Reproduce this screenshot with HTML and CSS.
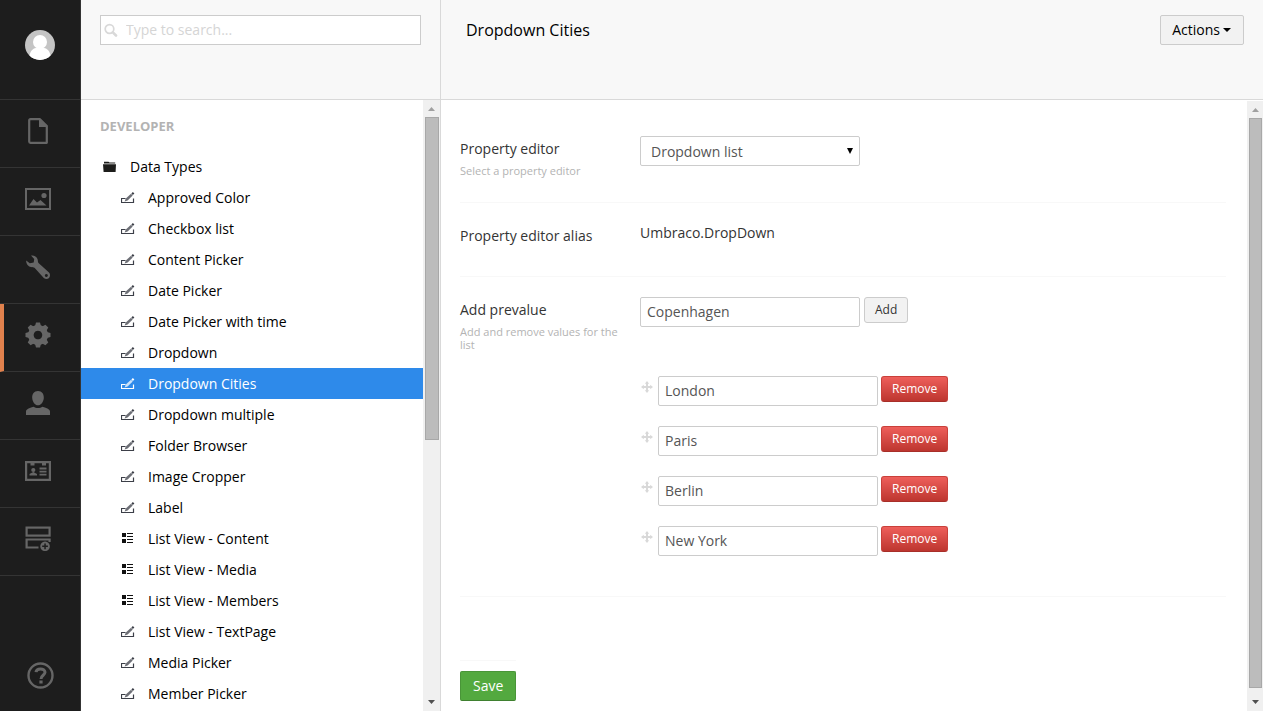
FILE: index.html
```html
<!DOCTYPE html>
<html lang="en">
<head>
<meta charset="utf-8">
<title>Dropdown Cities</title>
<link rel="stylesheet" href="styles.css">
</head>
<body>
<svg class="sprite" aria-hidden="true">
  <symbol id="i-edit" viewBox="0 0 14 12"><path d="M4.500 6.500H.5V10.500H12.500V6.500" fill="none" stroke="currentColor" stroke-width="1.200"/><path d="M3.600 9.500L4.800 6.600L10 1.800L11.700 3.400L6.600 8.500Z" fill="currentColor" opacity=".75"/><path d="M10.400 1.500L11.900 0L13.400 1.500L11.900 3Z" fill="currentColor"/></symbol>
  <symbol id="i-list" viewBox="0 0 14 12"><path d="M1 0h4v4h-4zM1 6h4v4h-4zM6 0h6v1h-6zM6 3h6v1h-6zM6 6h6v1h-6zM6 9h6v1h-6z" fill="currentColor"/></symbol>
  <symbol id="i-move" viewBox="0 0 12 12"><path d="M6 0L8.200 2.800H7V5H9.200V3.800L12 6L9.200 8.200V7H7V9.200H8.200L6 12L3.800 9.200H5V7H2.800V8.200L0 6L2.800 3.800V5H5V2.800H3.800Z" fill="currentColor"/></symbol>
  <symbol id="i-up" viewBox="0 0 7 4"><path d="M0 4L3.500 0L7 4Z" fill="currentColor"/></symbol>
  <symbol id="i-down" viewBox="0 0 7 4"><path d="M0 0H7L3.500 4Z" fill="currentColor"/></symbol>
</svg>
<div class="app">
  <nav class="rail" aria-label="Sections">
    <button class="avatar" aria-label="User profile">
      <svg viewBox="0 0 30 30"><defs><clipPath id="round"><circle cx="15" cy="15" r="15"/></clipPath></defs><g clip-path="url(#round)"><rect width="30" height="30" fill="#c4c4c4"/><circle cx="15" cy="12" r="7" fill="#fff"/><path d="M4 30C4 21 8 18.500 11 18H19C22 18.500 26 21 26 30Z" fill="#fff"/></g></svg>
    </button>
    <a class="section" href="#" aria-label="Content"><svg viewBox="0 0 26 26"><path d="M5.500 1.200H15L21.800 8V24.800H5.500Q4.200 24.800 4.200 23.500V2.500Q4.200 1.200 5.500 1.200Z" fill="none" stroke="currentColor" stroke-width="2.200" stroke-linejoin="round"/><path d="M14 1L22.500 9H14Z" fill="currentColor"/></svg></a>
    <a class="section" href="#" aria-label="Media"><svg viewBox="0 0 26 26"><rect x="1" y="3" width="24" height="20" fill="none" stroke="currentColor" stroke-width="2"/><path d="M4 19.500L8.500 13L12 16.500L15.500 14L21.500 19.500Z" fill="currentColor"/><circle cx="19" cy="9.500" r="2.600" fill="currentColor"/></svg></a>
    <a class="section" href="#" aria-label="Settings"><svg viewBox="0 0 26 26"><path fill-rule="evenodd" d="M6 1.500C9 1 11.500 2.500 12.500 5C13 6.700 12.800 8 13.500 9L24 18.500C25.500 20 25.300 22.500 24 24C22.500 25.500 20.300 25.400 18.800 24L9.500 13.800C8.700 13 7.500 13.300 6 13C3 12.500 1 9.800 1.200 6.500L4.800 9.200L8.700 8.600L9.200 5ZM21.300 20a1.500 1.500 0 1 0 .1 0Z" fill="currentColor"/></svg></a>
    <a class="section active" href="#" aria-label="Developer"><svg viewBox="0 0 26 26"><g fill="currentColor"><path fill-rule="evenodd" d="M13 3a10 10 0 1 0 .1 0ZM13 8.700a4.300 4.300 0 1 1-.1 0Z"/><path id="tooth" d="M10 4L11 .5H15L16 4Z"/><use href="#tooth" transform="rotate(45 13 13)"/><use href="#tooth" transform="rotate(90 13 13)"/><use href="#tooth" transform="rotate(135 13 13)"/><use href="#tooth" transform="rotate(180 13 13)"/><use href="#tooth" transform="rotate(225 13 13)"/><use href="#tooth" transform="rotate(270 13 13)"/><use href="#tooth" transform="rotate(315 13 13)"/></g></svg></a>
    <a class="section" href="#" aria-label="Users"><svg viewBox="0 0 26 26"><path d="M13 1C17 1 19 4 18.800 8C18.500 12 16 15.300 13 15.300S7.500 12 7.200 8C7 4 9 1 13 1ZM1 25V21.500C1 19.500 4 18 8.500 16.800C11 18.500 15 18.500 17.500 16.800C22 18 25 19.500 25 21.500V25Z" fill="currentColor"/></svg></a>
    <a class="section" href="#" aria-label="Members"><svg viewBox="0 0 26 26"><path fill-rule="evenodd" d="M0 3H26V23H0ZM2.200 5.200V20.800H23.800V5.200H21V7.500H17V5.200H9.500V7.500H5.500V5.200Z" fill="currentColor"/><circle cx="8.300" cy="12" r="2.100" fill="currentColor"/><path d="M4.500 17.500V16L8.300 14L12 16V17.500ZM14.500 9.500h7v2h-7zM14.500 12.700h7v1.800h-7zM14.500 15.700h7v1.800h-7z" fill="currentColor"/></svg></a>
    <a class="section" href="#" aria-label="Forms"><svg viewBox="0 0 26 26"><rect x="1.600" y="1.600" width="23" height="8" fill="none" stroke="currentColor" stroke-width="2.200"/><path d="M13.500 21.500H1.600V13.500H24.600V16" fill="none" stroke="currentColor" stroke-width="2.200"/><path fill-rule="evenodd" d="M20 15.500a4.800 4.800 0 1 0 .1 0ZM19.300 17.500h1.500v2.100h2.100v1.500h-2.100v2.100h-1.500v-2.100h-2.100v-1.500h2.100Z" fill="currentColor"/></svg></a>
    <a class="help" href="#" aria-label="Help"><svg viewBox="0 0 27 27"><circle cx="13.500" cy="13.500" r="12" fill="none" stroke="currentColor" stroke-width="2.400"/><path d="M9 10.200C9.300 5.800 18 5.800 18 10.300C18 13.300 14 13.300 14 17" fill="none" stroke="currentColor" stroke-width="3"/><rect x="12.400" y="18.500" width="3.200" height="3" fill="currentColor"/></svg></a>
  </nav>

  <aside class="side">
    <div class="bar search">
      <label class="search-box">
        <svg viewBox="0 0 14 14" aria-hidden="true"><circle cx="5.500" cy="6" r="4.300" fill="none" stroke="currentColor" stroke-width="1.700"/><path d="M8.800 9.300L12 12.500" stroke="currentColor" stroke-width="2.600" stroke-linecap="round"/></svg>
        <input type="text" placeholder="Type to search..." aria-label="Search">
      </label>
    </div>
    <div class="pane">
      <div class="tree">
        <h2>DEVELOPER</h2>
        <a class="node root" href="#"><svg viewBox="0 0 14 12"><path d="M1 2V.8H5.500L6.500 1.600H12.200V2.600H1ZM0 3.300H13L12.600 11H.6Z" fill="currentColor"/></svg>Data Types</a>
        <ul>
          <li><a class="node" href="#"><svg><use href="#i-edit"/></svg>Approved Color</a></li>
          <li><a class="node" href="#"><svg><use href="#i-edit"/></svg>Checkbox list</a></li>
          <li><a class="node" href="#"><svg><use href="#i-edit"/></svg>Content Picker</a></li>
          <li><a class="node" href="#"><svg><use href="#i-edit"/></svg>Date Picker</a></li>
          <li><a class="node" href="#"><svg><use href="#i-edit"/></svg>Date Picker with time</a></li>
          <li><a class="node" href="#"><svg><use href="#i-edit"/></svg>Dropdown</a></li>
          <li><a class="node current" href="#" aria-current="page"><svg><use href="#i-edit"/></svg>Dropdown Cities</a></li>
          <li><a class="node" href="#"><svg><use href="#i-edit"/></svg>Dropdown multiple</a></li>
          <li><a class="node" href="#"><svg><use href="#i-edit"/></svg>Folder Browser</a></li>
          <li><a class="node" href="#"><svg><use href="#i-edit"/></svg>Image Cropper</a></li>
          <li><a class="node" href="#"><svg><use href="#i-edit"/></svg>Label</a></li>
          <li><a class="node list" href="#"><svg><use href="#i-list"/></svg>List View - Content</a></li>
          <li><a class="node list" href="#"><svg><use href="#i-list"/></svg>List View - Media</a></li>
          <li><a class="node list" href="#"><svg><use href="#i-list"/></svg>List View - Members</a></li>
          <li><a class="node" href="#"><svg><use href="#i-edit"/></svg>List View - TextPage</a></li>
          <li><a class="node" href="#"><svg><use href="#i-edit"/></svg>Media Picker</a></li>
          <li><a class="node" href="#"><svg><use href="#i-edit"/></svg>Member Picker</a></li>
        </ul>
      </div>
      <div class="scroll" aria-hidden="true">
        <svg class="up"><use href="#i-up"/></svg>
        <div class="groove"><div class="thumb" style="height: 56%"></div></div>
        <svg><use href="#i-down"/></svg>
      </div>
    </div>
  </aside>

  <main class="main">
    <header class="bar head">
      <h1>Dropdown Cities</h1>
      <button class="actions">Actions <svg viewBox="0 0 8 4" aria-hidden="true"><path d="M0 0H8L4 4Z"/></svg></button>
    </header>
    <div class="pane">
      <form class="form">
        <div class="row">
          <div class="label"><label for="editor">Property editor</label><small>Select a property editor</small></div>
          <div class="field">
            <div class="select"><select id="editor"><option>Dropdown list</option></select><svg viewBox="0 0 6 6" preserveAspectRatio="none" aria-hidden="true"><path d="M0 0H6L3 6Z"/></svg></div>
          </div>
        </div>
        <div class="row">
          <div class="label"><span>Property editor alias</span></div>
          <div class="field">Umbraco.DropDown</div>
        </div>
        <div class="row">
          <div class="label"><label for="prevalue">Add prevalue</label><small>Add and remove values for the list</small></div>
          <div class="field">
            <div class="adder"><input id="prevalue" class="text" type="text" value="Copenhagen"><button type="button" class="btn">Add</button></div>
            <ul class="values">
              <li><svg><use href="#i-move"/></svg><input class="text" type="text" value="London" aria-label="Value 1"><button type="button" class="btn remove">Remove</button></li>
              <li><svg><use href="#i-move"/></svg><input class="text" type="text" value="Paris" aria-label="Value 2"><button type="button" class="btn remove">Remove</button></li>
              <li><svg><use href="#i-move"/></svg><input class="text" type="text" value="Berlin" aria-label="Value 3"><button type="button" class="btn remove">Remove</button></li>
              <li><svg><use href="#i-move"/></svg><input class="text" type="text" value="New York" aria-label="Value 4"><button type="button" class="btn remove">Remove</button></li>
            </ul>
          </div>
        </div>
        <div class="submit"><button type="submit" class="save">Save</button></div>
      </form>
      <div class="scroll wide" aria-hidden="true">
        <svg class="up"><use href="#i-up"/></svg>
        <div class="groove"><div class="thumb" style="height: 99%"></div></div>
        <svg><use href="#i-down"/></svg>
      </div>
    </div>
  </main>
</div>
</body>
</html>
```
FILE: styles.css
```css
* { box-sizing: border-box; }
body { margin: 0; font: 14px/20px "Open Sans", sans-serif; color: #343434; background: #fff; }
button, input, select { font: inherit; margin: 0; }
a { color: inherit; text-decoration: none; }
ul { list-style: none; margin: 0; padding: 0; }
svg { display: block; flex: none; }
.sprite { display: none; }
.app { display: flex; height: 100vh; overflow: hidden; }

/* Section rail */
.rail { display: flex; flex-direction: column; flex: none; width: 81px; background: #1d1d1d; border-right: 1px solid #343434; color: #666; }
.avatar { display: flex; flex: none; height: 100px; padding: 30px 25px; background: none; border: 0; border-bottom: 1px solid #343434; }
.avatar svg { width: 30px; height: 30px; }
.section { display: flex; flex: none; height: 68px; padding: 18px 25px; border-bottom: 1px solid #343434; }
.section svg { width: 26px; height: 26px; }
.section.active { border-left: 4px solid #e0814d; border-bottom-color: #343434; padding-left: 21px; }
.help { margin-top: auto; padding: 0 27px 22px; }
.help svg { width: 27px; height: 27px; }

/* Shared panel parts */
.bar { flex: none; height: 100px; background: #f8f8f8; border-bottom: 1px solid #d9d9d9; }
.pane { display: flex; flex: 1; min-height: 0; }
.scroll { display: flex; flex-direction: column; align-items: center; flex: none; width: 17px; padding: 7px 0; background: #f0f0f0; color: #505050; }
.scroll svg { width: 7px; height: 4px; }
.scroll .up { color: #a0a0a0; }
.scroll.wide { width: 16px; margin-top: 1px; }
.groove { flex: 1; align-self: stretch; padding: 0 1px 0 2px; margin: 6px 0; }
.thumb { height: 50%; background: #bcbcbc; border: 1px solid #a8a8a8; }

/* Tree */
.side { display: flex; flex-direction: column; flex: none; width: 360px; border-right: 1px solid #d9d9d9; }
.search { padding: 15px 19px; }
.search-box { display: flex; align-items: center; height: 30px; padding-left: 3px; gap: 8px; background: #fff; border: 1px solid #ccc; color: #d9d9d9; }
.search-box svg { width: 14px; height: 14px; }
.search-box input { flex: 1; min-width: 0; padding: 0; border: 0; outline: 0; background: none; color: #343434; }
.search-box input::placeholder { color: #d5d5d5; opacity: 1; }
.tree { flex: 1; min-width: 0; overflow: hidden; color: #000; }
.tree h2 { margin: 16px 0 15px 19px; font-size: 13px; line-height: 20px; font-weight: 700; color: #b3b3b3; }
.node { display: flex; align-items: center; gap: 13px; height: 31px; padding-left: 40px; white-space: nowrap; }
.node svg { width: 14px; height: 12px; color: #3c3f48; }
.node.list svg { color: #111; }
.node.root { padding-left: 22px; }
.node.root svg { color: #1d1d1b; }
.node.current { background: #2e8aea; color: #fff; }
.node.current svg { color: #fff; }

/* Editor */
.main { display: flex; flex-direction: column; flex: 1; min-width: 0; }
.head { display: flex; justify-content: space-between; align-items: flex-start; padding: 15px 19px 0 25px; }
.head h1 { margin: 0; font-size: 16px; line-height: 30px; font-weight: 400; color: #000; }
.actions { display: flex; align-items: center; gap: 3px; height: 30px; padding: 0 12px 0 11px; background: #f2f2f2; border: 1px solid #ccc; border-radius: 2px; color: #000; }
.actions svg { width: 8px; height: 4px; }
.form { flex: 1; min-width: 0; padding: 16px 21px 0 19px; overflow: hidden; }
.row { display: flex; gap: 20px; padding: 20px 0; border-bottom: 1px solid #f8f8f8; }
.label { flex: none; width: 160px; padding: 3px 0 5px; }
.label label, .label span { display: block; }
.label span { padding-bottom: 5px; }
.label small { display: block; margin-top: 5px; font-size: 11px; line-height: 13px; color: #b3b3b3; }
.field { flex: 1; min-width: 0; }
.select { position: relative; width: 220px; color: #000; }
.select select { appearance: none; width: 100%; height: 30px; padding: 2px 24px 0 10px; border: 1px solid #ccc; border-radius: 2px; background: #fff; color: #555; }
.select svg { position: absolute; right: 7px; top: 12px; width: 6px; height: 6px; pointer-events: none; }
.text { width: 220px; height: 30px; padding: 0 6px 2px; border: 1px solid #ccc; border-radius: 2px; background: #fff; color: #555; }
.adder { display: flex; align-items: flex-start; gap: 4px; }
.btn { height: 26px; padding: 0 10px; font-size: 12px; line-height: 24px; background: #f2f2f2; border: 1px solid #ccc; border-radius: 3px; color: #343434; }
.values { display: grid; gap: 20px; padding: 49px 0 20px; }
.values li { display: flex; align-items: flex-start; gap: 3px; }
.values svg { width: 12px; height: 12px; margin: 5px 2px 0 1px; color: #d9d9d9; }
.remove { background: linear-gradient(#ee5f5b, #bd362f); border-color: #c9403a #c9403a #a82f29; color: #fff; }
.submit { display: inline-block; margin-top: 63px; padding-top: 10px; border-top: 1px solid #f8f8f8; }
.save { display: block; height: 30px; padding: 0 12px; background: #53a93f; border: 1px solid #499538; border-bottom-color: #3f8030; border-radius: 2px; color: #fff; }
```
